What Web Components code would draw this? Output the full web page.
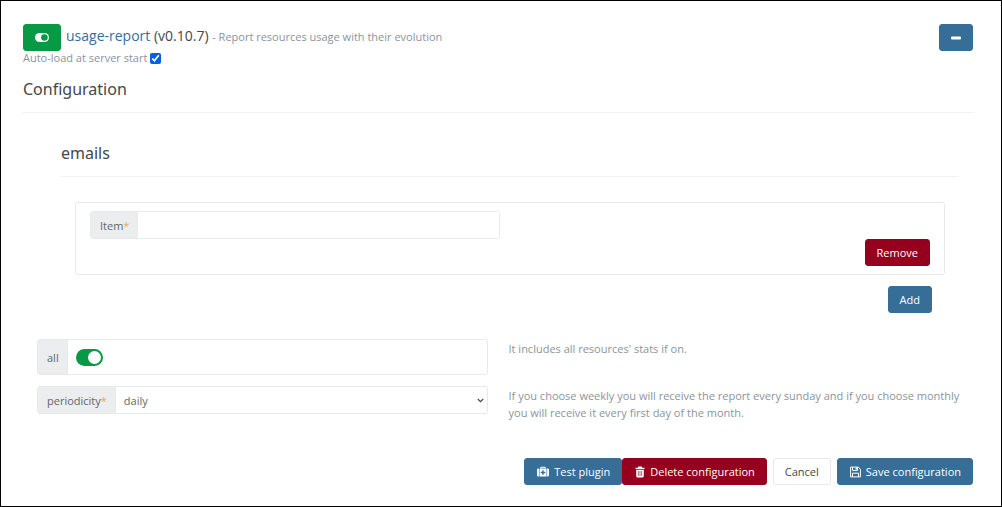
<!DOCTYPE html>
<html lang="en">
<head>
  <meta charset="utf-8">
  <meta name="viewport" content="width=device-width, initial-scale=1">
  <title>usage-report</title>
  <style>
    :root {
      --primary: #366e98;
      --success: #089944;
      --danger: #96001e;
      --text: #43474b;
      --muted: #8b949c;
      --label: #62686d;
      --border: #e7e9eb;
      --radius: 3px;
    }
    * {
      box-sizing: border-box;
    }
    body {
      margin: 0;
      min-height: 100vh;
      border: 1px solid #000;
      background: #fff;
      color: var(--text);
      font: 11px/17px "Open Sans", "Noto Sans", sans-serif;
    }
  </style>
</head>
<body>
  <plugin-card></plugin-card>

  <script>
    const icons = {
      toggle: '<svg width="14" height="9" viewBox="0 0 14 9"><rect width="14" height="9" rx="4.5" fill="#fff"/><circle cx="9.4" cy="4.5" r="3.3" fill="#089944"/></svg>',
      minus: '<svg width="10" height="12" viewBox="0 0 10 12"><rect y="4.5" width="10" height="3" rx="1" fill="#fff"/></svg>',
      medkit: '<svg width="12" height="12" viewBox="0 0 12 12" fill="#fff"><path d="M3.3 2.6V1.5Q3.3.7 4.1.7h3.8q.8 0 .8.8v1.100h-1V1.8H4.300v.8zM0 3.800Q0 2.600 1.300 2.600h.6v7.900h-.6Q0 10.500 0 9.300zM10.100 2.600h.6q1.300 0 1.300 1.200v5.500q0 1.200-1.300 1.200h-.6z"/><path fill-rule="evenodd" d="M2.500 2.600h7v7.900h-7zM5.300 4.200v1.600H3.700v1.400h1.600v1.600h1.400V7.200h1.600V5.800H6.700V4.200z"/></svg>',
      trash: '<svg width="10" height="12" viewBox="0 0 10 12"><path fill="#fff" fill-rule="evenodd" d="M3.300.6h3.400l.6 1.200H9.500v1.300H.5V1.800h2.200zM1.200 3.700h7.600v6.200q0 1.600-1.500 1.600H2.700q-1.500 0-1.500-1.600zM2.900 5v5h.6V5zM4.700 5v5h.6V5zM6.500 5v5h.6V5z"/></svg>',
      save: '<svg width="11" height="12" viewBox="0 0 11 12" fill="none" stroke="#fff"><path d="M.6 1.100h7.700l2.100 2.100v7.700H.6zM2.500 1.100v3.300h5V1.100M2.500 10.900V7.200h6v3.700"/><path d="M6.300 1.600v2" stroke-width="1.400"/></svg>'
    };

    class ActionButton extends HTMLElement {
      connectedCallback() {
        const icon = icons[this.getAttribute('icon')] || '';
        const label = this.getAttribute('label');
        this.attachShadow({ mode: 'open' }).innerHTML = `
          <style>
            :host {
              display: block;
              flex: none;
            }
            button {
              display: flex;
              align-items: center;
              justify-content: center;
              gap: 5px;
              min-height: 27px;
              padding: 4px 11px;
              border: 1px solid var(--primary);
              border-radius: var(--radius);
              background: var(--primary);
              color: #fff;
              font: inherit;
              cursor: pointer;
            }
            svg {
              display: block;
            }
            svg:not(:last-child) {
              margin-left: 1px;
            }
            :host([variant="success"]) button {
              border-color: var(--success);
              background: var(--success);
            }
            :host([variant="danger"]) button {
              border-color: var(--danger);
              background: var(--danger);
            }
            :host([variant="light"]) button {
              border-color: var(--border);
              background: #fff;
              color: var(--text);
            }
            button:hover {
              filter: brightness(0.93);
            }
          </style>
          <button type="button"${label ? ` aria-label="${label}"` : ''}>${icon}${label ? '' : '<span><slot></slot></span>'}</button>
        `;
      }
    }

    class FormSection extends HTMLElement {
      connectedCallback() {
        this.attachShadow({ mode: 'open' }).innerHTML = `
          <style>
            :host {
              display: block;
            }
            h3 {
              margin: 0;
              padding-bottom: 12px;
              border-bottom: 1px solid #f0f1f2;
              font-family: "Noto Sans", sans-serif;
              font-size: 16px;
              font-weight: 400;
              line-height: 22px;
            }
          </style>
          <h3>${this.getAttribute('heading')}</h3>
          <slot></slot>
        `;
      }
    }

    class FormField extends HTMLElement {
      connectedCallback() {
        const name = this.getAttribute('name');
        const type = this.getAttribute('type');
        const required = this.hasAttribute('required');
        this.attachShadow({ mode: 'open' }).innerHTML = `
          <style>
            :host {
              display: grid;
              grid-template-columns: 1fr 1fr;
              column-gap: 21px;
              align-items: start;
            }
            * {
              box-sizing: border-box;
            }
            .group {
              display: flex;
              min-height: 28px;
              border: 1px solid var(--border);
              border-radius: var(--radius);
              overflow: hidden;
            }
            .group.switch {
              min-height: 36px;
            }
            label {
              display: flex;
              align-items: center;
              padding: 1px 8px 0 9px;
              border-right: 1px solid var(--border);
              background: #ebedef;
              color: var(--label);
            }
            .required {
              color: #f5a64b;
            }
            input[type="text"],
            select {
              flex: 1;
              min-width: 0;
              border: 0;
              padding: 1px 8px 0;
              background: #fff;
              color: var(--label);
              font: inherit;
            }
            .select {
              position: relative;
            }
            select {
              appearance: none;
            }
            .chevron {
              position: absolute;
              top: 10px;
              right: 3px;
              pointer-events: none;
            }
            input[type="checkbox"] {
              appearance: none;
              align-self: center;
              display: flex;
              width: 27px;
              height: 17px;
              margin: 0 8px;
              padding: 2px;
              border-radius: 9px;
              background: #ccc;
            }
            input[type="checkbox"]::before {
              content: "";
              width: 13px;
              height: 13px;
              border-radius: 50%;
              background: #fff;
            }
            input[type="checkbox"]:checked {
              justify-content: flex-end;
              background: var(--success);
            }
            /* the help may run into the gutter of the card */
            .help {
              margin-right: -14px;
              padding-top: 1px;
              color: var(--muted);
            }
          </style>
          <div class="group ${type}">
            <label for="field"><span>${name}${required ? '<span class="required">*</span>' : ''}</span></label>
            ${this.control(type)}
          </div>
          <div class="help"><slot></slot></div>
        `;
      }

      control(type) {
        if (type === 'switch') return '<input type="checkbox" id="field" role="switch" checked>';
        if (type === 'select') {
          const options = this.getAttribute('options').split(',');
          return `<select id="field">${options.map(o => `<option>${o}</option>`).join('')}</select>
            <svg class="chevron" width="7" height="7" viewBox="0 0 7 7"><path d="M.8 2l2.700 2.700L6.200 2" fill="none" stroke="#43474b" stroke-width="1.200"/></svg>`;
        }
        return '<input type="text" id="field">';
      }
    }

    class ArrayItem extends HTMLElement {
      connectedCallback() {
        this.attachShadow({ mode: 'open' }).innerHTML = `
          <style>
            :host {
              display: block;
              padding: 8px 14px;
              border: 1px solid var(--border);
              border-radius: var(--radius);
            }
            .actions {
              display: flex;
              justify-content: flex-end;
            }
          </style>
          <slot></slot>
          <div class="actions"><action-button variant="danger">Remove</action-button></div>
        `;
      }
    }

    class PluginCard extends HTMLElement {
      connectedCallback() {
        this.attachShadow({ mode: 'open' }).innerHTML = `
          <style>
            :host {
              display: block;
              padding: 23px 28px 20px 22px;
            }
            header {
              display: flex;
              align-items: flex-start;
              gap: 5px;
            }
            h2 {
              flex: 1;
              margin: 0;
              font-size: 14px;
              font-weight: 400;
              line-height: 24px;
            }
            h2 a {
              color: var(--primary);
              text-decoration: none;
            }
            h2 small {
              color: var(--muted);
              font-size: 11px;
            }
            .autoload {
              display: flex;
              align-items: center;
              gap: 3px;
              line-height: 14px;
              color: var(--muted);
            }
            .autoload input {
              width: 11px;
              height: 11px;
              margin: 0;
              accent-color: #0060df;
            }
            .configuration {
              margin-top: 13px;
            }
            .emails {
              margin: 29px 14px 0 38px;
            }
            .list {
              margin: 25px 28px 0 52px;
            }
            .add {
              display: flex;
              justify-content: flex-end;
              margin: 11px 41px 0;
            }
            .fields {
              display: grid;
              gap: 11px;
              margin: 26px 14px 0;
            }
            footer {
              display: flex;
              justify-content: flex-end;
              gap: 6px;
              margin-top: 37px;
            }
            .joined {
              display: flex;
            }
          </style>
          <header>
            <action-button icon="toggle" variant="success" label="Disable plugin"></action-button>
            <h2><a href="#usage-report">usage-report</a> (v0.10.7) <small>- Report resources usage with their evolution</small></h2>
            <action-button icon="minus" label="Collapse"></action-button>
          </header>
          <div class="autoload">
            <label for="autoload">Auto-load at server start</label>
            <input type="checkbox" id="autoload" checked>
          </div>
          <form-section class="configuration" heading="Configuration">
            <form-section class="emails" heading="emails"></form-section>
            <array-item class="list"><form-field name="Item" type="text" required></form-field></array-item>
            <div class="add"><action-button>Add</action-button></div>
            <div class="fields">
              <form-field name="all" type="switch">It includes all resources' stats if on.</form-field>
              <form-field name="periodicity" type="select" options="daily,weekly,monthly" required>If you choose weekly you will receive the report every sunday and if you choose monthly you will receive it every first day of the month.</form-field>
            </div>
          </form-section>
          <footer>
            <div class="joined">
              <action-button icon="medkit">Test plugin</action-button>
              <action-button icon="trash" variant="danger">Delete configuration</action-button>
            </div>
            <action-button variant="light">Cancel</action-button>
            <action-button icon="save">Save configuration</action-button>
          </footer>
        `;
      }
    }

    customElements.define('action-button', ActionButton);
    customElements.define('form-section', FormSection);
    customElements.define('form-field', FormField);
    customElements.define('array-item', ArrayItem);
    customElements.define('plugin-card', PluginCard);
  </script>
</body>
</html>
